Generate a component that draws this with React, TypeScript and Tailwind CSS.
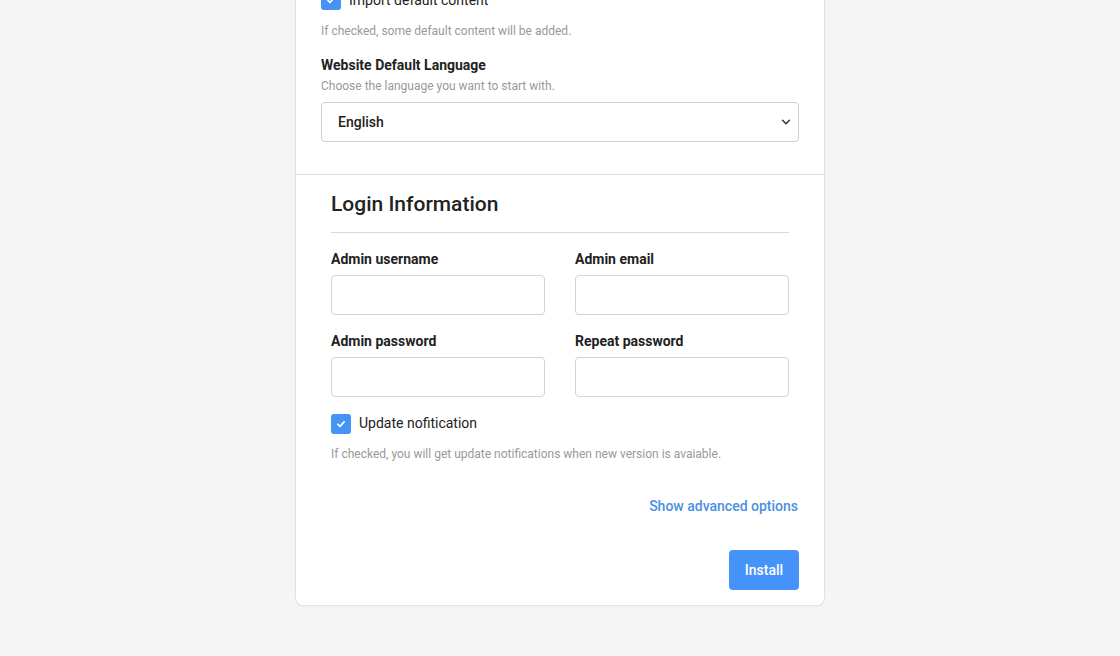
import { ChevronDown } from 'lucide-react'

function Check() {
  return (
    <span className="flex h-5 w-5 shrink-0 items-center justify-center rounded-[3px] bg-[#4593f5]">
      <svg viewBox="0 0 12 12" className="h-[10px] w-[10px]">
        <path d="M2.2 6.3 4.8 8.8 9.8 3.4" fill="none" stroke="#fff" strokeWidth="2" strokeLinecap="round" strokeLinejoin="round" />
      </svg>
    </span>
  )
}

function Field({ label }: { label: string }) {
  return (
    <div>
      <div className="text-[14px] font-bold leading-5 text-[#222]">{label}</div>
      <input className="mt-[6px] block h-10 w-full rounded-[4px] border border-[#d4d4d4] bg-white px-3 text-[15px] outline-none" />
    </div>
  )
}

export default function App() {
  return (
    <div className="min-h-[656px] overflow-hidden bg-[#f5f5f5] font-['Roboto',sans-serif]">
      <div className="mx-auto -mt-[10px] w-[530px] rounded-b-[8px] border border-t-0 border-[#e2e2e2] bg-white shadow-[0_1px_2px_rgba(0,0,0,0.04)]">
        <section className="px-[25px] pb-[32px]">
          <label className="flex h-5 items-center gap-2">
            <Check />
            <span className="text-[14px] text-[#222]">Import default content</span>
          </label>
          <p className="mt-[12px] text-[12px] leading-[18px] text-[#999]">
            If checked, some default content will be added.
          </p>
          <div className="mt-[15px] text-[14px] font-bold leading-5 text-[#222]">Website Default Language</div>
          <p className="mt-[2px] text-[12px] leading-[18px] text-[#999]">Choose the language you want to start with.</p>
          <div className="relative mt-[7px] flex h-10 items-center rounded-[4px] border border-[#cfcfcf] px-4">
            <span className="text-[14px] font-medium text-[#222]">English</span>
            <ChevronDown className="absolute right-[5px] h-[14px] w-[14px] text-[#333]" strokeWidth={2.5} />
          </div>
        </section>
        <section className="border-t border-[#dcdcdc] px-[25px] pb-[15px] pt-[15px]">
          <div className="px-[10px]">
            <h2 className="text-[21px] font-medium leading-7 text-[#222]">Login Information</h2>
            <hr className="mt-[14px] border-[#d8d8d8]" />
            <div className="mt-4 grid grid-cols-2 gap-x-[30px] gap-y-4">
              <Field label="Admin username" />
              <Field label="Admin email" />
              <Field label="Admin password" />
              <Field label="Repeat password" />
            </div>
            <label className="mt-[17px] flex h-5 items-center gap-2">
              <Check />
              <span className="-mt-[1px] text-[14px] text-[#222]">Update nofitication</span>
            </label>
            <p className="mt-[11px] text-[12px] leading-[18px] text-[#999]">
              If checked, you will get update notifications when new version is avaiable.
            </p>
          </div>
          <div className="mt-[33px] flex justify-end pr-[1px]">
            <a className="text-[14px] font-medium leading-5 text-[#4a90e2]">Show advanced options</a>
          </div>
          <div className="mt-[34px] flex justify-end">
            <button className="h-10 w-[70px] rounded-[4px] bg-[#4593f8] text-[14px] font-medium text-white">Install</button>
          </div>
        </section>
      </div>
    </div>
  )
}
